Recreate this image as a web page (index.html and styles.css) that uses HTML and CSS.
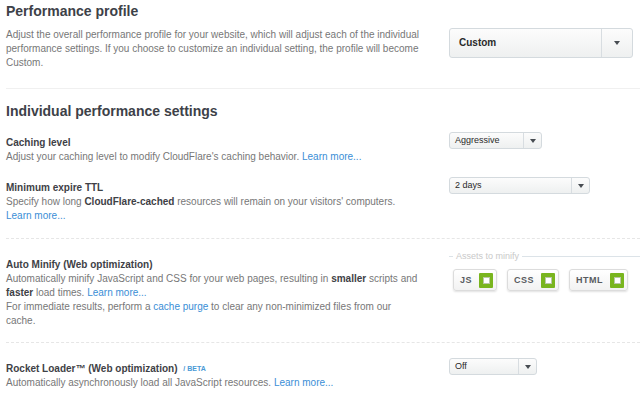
FILE: index.html
```
<!DOCTYPE html>
<html lang="en">
<head>
  <meta charset="UTF-8" />
  <title>Performance settings</title>
  <link rel="stylesheet" href="styles.css">
</head>
<body>

  <div class="page">
    <section class="profile">
      <h2>Performance profile</h2>
      <div class="row">
        <p class="desc">Adjust the overall performance profile for your website, which will adjust each of the individual performance settings. If you choose to customize an individual setting, the profile will become Custom.</p>
        <div class="control">
          <div class="select select-lg">
            <span class="select-value">Custom</span>
            <span class="select-arrow"></span>
          </div>
        </div>
      </div>
    </section>

    <section class="settings">
      <h2>Individual performance settings</h2>

      <div class="group group-first">
        <div class="row setting">
          <div class="info">
            <h3>Caching level</h3>
            <p class="desc">Adjust your caching level to modify CloudFlare's caching behavior. <a href="#">Learn more...</a></p>
          </div>
          <div class="control">
            <div class="select select-aggressive">
              <span class="select-value">Aggressive</span>
              <span class="select-arrow"></span>
            </div>
          </div>
        </div>

        <div class="row setting">
          <div class="info">
            <h3>Minimum expire TTL</h3>
            <p class="desc">Specify how long <b>CloudFlare-cached</b> resources will remain on your visitors' computers. <a href="#">Learn more...</a></p>
          </div>
          <div class="control">
            <div class="select select-ttl">
              <span class="select-value">2 days</span>
              <span class="select-arrow"></span>
            </div>
          </div>
        </div>
      </div>

      <div class="group">
        <div class="row setting">
          <div class="info">
            <h3>Auto Minify (Web optimization)</h3>
            <p class="desc">Automatically minify JavaScript and CSS for your web pages, resulting in <b>smaller</b> scripts and <b>faster</b> load times. <a href="#">Learn more...</a><br>For immediate results, perform a <a href="#">cache purge</a> to clear any non-minimized files from our cache.</p>
          </div>
          <div class="control minify">
            <div class="legend"><span>Assets to minify</span></div>
            <div class="toggles">
              <span class="toggle">JS<i class="check"></i></span>
              <span class="toggle">CSS<i class="check"></i></span>
              <span class="toggle">HTML<i class="check"></i></span>
            </div>
          </div>
        </div>
      </div>

      <div class="group group-last">
        <div class="row setting">
          <div class="info">
            <h3>Rocket Loader™ (Web optimization) <span class="beta">/ BETA</span></h3>
            <p class="desc">Automatically asynchronously load all JavaScript resources. <a href="#">Learn more...</a></p>
          </div>
          <div class="control">
            <div class="select select-off">
              <span class="select-value">Off</span>
              <span class="select-arrow"></span>
            </div>
          </div>
        </div>
      </div>
    </section>
  </div>

</body>
</html>
```

FILE: styles.css
```
* {
  margin: 0;
  padding: 0;
  box-sizing: border-box;
}

body {
  font-family: "Liberation Sans", Arial, sans-serif;
  background-color: #fff;
  color: #777;
  overflow: hidden;
}

.page {
  padding-left: 6px;
}

h2 {
  font-size: 14px;
  line-height: 18px;
  font-weight: bold;
  color: #3d4148;
}

h3 {
  font-size: 10px;
  line-height: 15px;
  font-weight: bold;
  color: #3e4146;
}

.desc {
  font-size: 10px;
  line-height: 14px;
  color: #777;
}

.desc b {
  color: #3e4146;
}

a {
  color: #3a8ed6;
  text-decoration: none;
}

.row {
  display: grid;
  grid-template-columns: 415px 1fr;
  column-gap: 28px;
  align-items: start;
}

/* profile */

.profile {
  padding-top: 2px;
  padding-bottom: 18px;
  border-bottom: 1px solid #f0f0f0;
}

.profile .row {
  margin-top: 8px;
}

/* settings */

.settings h2 {
  margin-top: 13px;
}

.group {
  padding: 15px 0 14px;
  border-bottom: 1px dashed #e6e6e6;
}

.group-first {
  padding-top: 12px;
  padding-bottom: 15px;
}

.group-last {
  border-bottom: none;
}

.setting + .setting {
  margin-top: 13px;
}

.setting .info {
  padding-top: 3px;
}

.beta {
  font-size: 7px;
  color: #4a9ad6;
  margin-left: 3px;
  vertical-align: 1px;
}

/* selects */

.select {
  display: flex;
  height: 17px;
  border: 1px solid #d4dade;
  border-radius: 3px;
  background: linear-gradient(#fcfcfc, #eef0f0);
  color: #2a2a2a;
  font-size: 9px;
}

.select-value {
  flex: 1;
  padding-left: 5px;
  line-height: 15px;
}

.select-arrow {
  width: 18px;
  border-left: 1px solid #d8dde1;
  display: flex;
  align-items: center;
  justify-content: center;
}

.select-arrow::after {
  content: "";
  border-left: 3px solid transparent;
  border-right: 3px solid transparent;
  border-top: 4px solid #474c52;
}

.select-lg {
  width: 184px;
  height: 30px;
  font-size: 10px;
  font-weight: bold;
}

.select-lg .select-value {
  padding-left: 9px;
  line-height: 28px;
}

.select-lg .select-arrow {
  width: 31px;
}

.select-aggressive {
  width: 93px;
}

.select-ttl {
  width: 141px;
}

.select-off {
  width: 88px;
}

/* auto minify */

.minify {
  margin-top: -3px;
}

.legend {
  display: flex;
  align-items: center;
  font-size: 9px;
  line-height: 10px;
  color: #c9c9c9;
}

.legend::before,
.legend::after {
  content: "";
  border-top: 1px solid #dce3e8;
}

.legend::before {
  width: 4px;
}

.legend::after {
  flex: 1;
}

.legend span {
  padding: 0 3px 0 3px;
}

.toggles {
  display: flex;
  gap: 10px;
  margin-top: 8px;
  margin-left: 4px;
}

.toggle {
  display: flex;
  align-items: center;
  height: 22px;
  padding: 0 3px 0 6px;
  gap: 7px;
  border: 1px solid #dcdcdc;
  border-radius: 3px;
  background: linear-gradient(#fff, #f2f2f2);
  box-shadow: 0 1px 2px rgba(0, 0, 0, 0.12);
  font-size: 9px;
  font-weight: bold;
  letter-spacing: 0.5px;
  color: #585b60;
}

.check {
  width: 14px;
  height: 15px;
  border-radius: 1px;
  background-color: #79b51e;
  display: flex;
  align-items: center;
  justify-content: center;
}

.check::after {
  content: "";
  width: 5px;
  height: 5px;
  background-color: #fff;
  border: 1px solid #b8c7a6;
}
```
